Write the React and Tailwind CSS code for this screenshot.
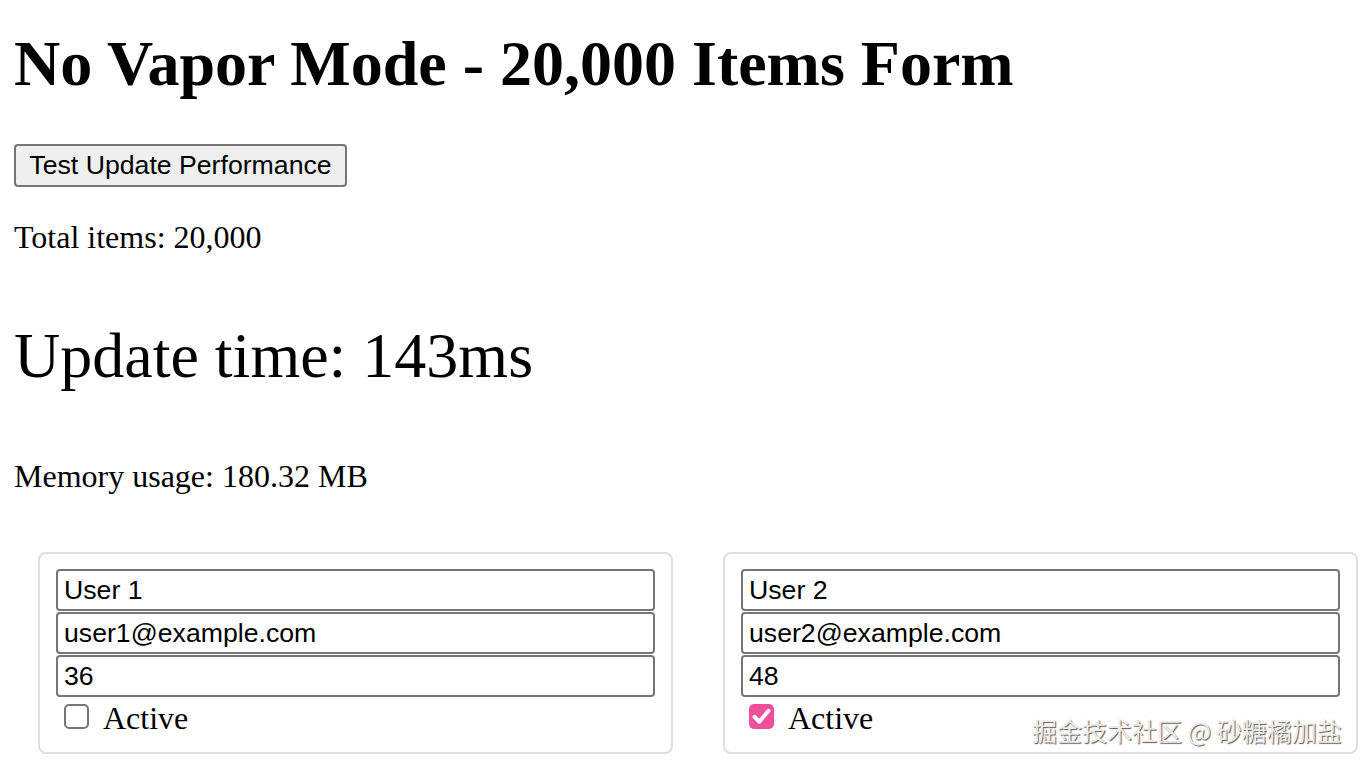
import React, { useState } from 'react';

const initialItems = [
  { id: 1, name: 'User 1', email: 'user1@example.com', age: '36', active: false },
  { id: 2, name: 'User 2', email: 'user2@example.com', age: '48', active: true },
];

const ItemCard = ({ item, onToggle }) => {
  const inputClass =
    "block w-full h-[42px] border-2 border-[#767676] rounded-[4px] px-[6px] text-[26.67px] text-black bg-white outline-none font-['Liberation_Sans',Arial,sans-serif]";

  return (
    <div className="border-2 border-[#dedede] rounded-[8px] px-4 pt-[15px] pb-[17px]">
      <div className="flex flex-col gap-[1px]">
        <input className={inputClass} defaultValue={item.name} />
        <input className={inputClass} defaultValue={item.email} />
        <input className={inputClass} defaultValue={item.age} />
      </div>
      <label className="flex items-center h-[38px]">
        <span
          onClick={onToggle}
          className={
            item.active
              ? 'ml-2 w-[25px] h-[25px] rounded-[5px] bg-[#ef4f9b] flex items-center justify-center'
              : 'ml-2 w-[25px] h-[25px] rounded-[5px] border-2 border-[#767676] bg-white'
          }
        >
          {item.active && (
            <svg className="w-[21px] h-[21px]" viewBox="0 0 24 24" fill="none" stroke="white" strokeWidth="4.5" strokeLinecap="round" strokeLinejoin="round">
              <path d="M4 12.5l5.5 5.5L20 5.5" />
            </svg>
          )}
        </span>
        <span className="ml-[14px] mt-[4px] text-[32px] leading-[36px] text-black">Active</span>
      </label>
    </div>
  );
};

export default function App() {
  const [items, setItems] = useState(initialItems);

  const toggle = (id) => {
    setItems(items.map((it) => (it.id === id ? { ...it, active: !it.active } : it)));
  };

  return (
    <div className="relative min-h-[766px] bg-white pl-[14px] text-black font-['Liberation_Serif','Times_New_Roman',serif]">
      <h1 className="pt-[27px] text-[64px] leading-[74px] font-bold">No Vapor Mode - 20,000 Items Form</h1>

      <button className="mt-[43px] w-[333px] h-[43px] border-2 border-[#767676] rounded-[4px] bg-[#efefef] text-[26.67px] leading-none text-black font-['Liberation_Sans',Arial,sans-serif]">
        Test Update Performance
      </button>

      <p className="mt-[32px] text-[32px] leading-[36px]">Total items: 20,000</p>

      <p className="mt-[64px] text-[64px] leading-[74px]">Update time: 143ms</p>

      <p className="mt-[65px] text-[32px] leading-[36px]">Memory usage: 180.32 MB</p>

      <div className="mt-[58px] ml-[24px] grid grid-cols-[635px_635px] gap-x-[50px]">
        {items.map((item) => (
          <ItemCard key={item.id} item={item} onToggle={() => toggle(item.id)} />
        ))}
      </div>

      <div className="absolute left-[1032px] top-[713px] text-[25px] leading-[34px] text-[#ececec] [text-shadow:1px_1px_1px_#5a5a5a] font-['Noto_Sans_CJK_SC','Noto_Sans',sans-serif]">
        掘金技术社区 @ 砂糖橘加盐
      </div>
    </div>
  );
}
